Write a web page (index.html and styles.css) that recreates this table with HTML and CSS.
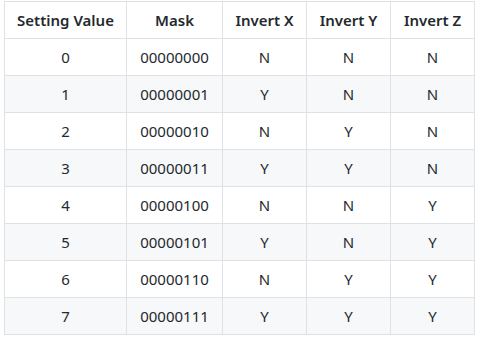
FILE: index.html
```html
<!DOCTYPE html>
<html>
<head>
<title>Invert Mask Table</title>
<link rel="stylesheet" href="styles.css">
</head>
<body>

<div class="wrap">
    <table class="maskTable">
        <thead>
            <tr>
                <th class="colValue">Setting Value</th>
                <th class="colMask">Mask</th>
                <th class="colAxis">Invert X</th>
                <th class="colAxis">Invert Y</th>
                <th class="colAxis">Invert Z</th>
            </tr>
        </thead>
        <tbody>
            <tr><td>0</td><td>00000000</td><td>N</td><td>N</td><td>N</td></tr>
            <tr><td>1</td><td>00000001</td><td>Y</td><td>N</td><td>N</td></tr>
            <tr><td>2</td><td>00000010</td><td>N</td><td>Y</td><td>N</td></tr>
            <tr><td>3</td><td>00000011</td><td>Y</td><td>Y</td><td>N</td></tr>
            <tr><td>4</td><td>00000100</td><td>N</td><td>N</td><td>Y</td></tr>
            <tr><td>5</td><td>00000101</td><td>Y</td><td>N</td><td>Y</td></tr>
            <tr><td>6</td><td>00000110</td><td>N</td><td>Y</td><td>Y</td></tr>
            <tr><td>7</td><td>00000111</td><td>Y</td><td>Y</td><td>Y</td></tr>
        </tbody>
    </table>
</div>

</body>
</html>
```

FILE: styles.css
```css
body{
    margin:0;
    background:#ffffff;
    font-family:"Noto Sans", "Open Sans", sans-serif;
    color:#24292e;
}
.wrap{
    padding:1px 0 0 4px;
}
.maskTable{
    border-collapse:collapse;
    table-layout:fixed;
    width:470px;
    font-size:15px;
}
.maskTable th,
.maskTable td{
    border:1px solid #dfe2e5;
    height:37px;
    padding:0 6px;
    text-align:center;
    box-sizing:border-box;
}
.maskTable th{
    font-weight:600;
}
.maskTable tbody tr:nth-child(even){
    background:#f6f8fa;
}
.maskTable tbody tr:nth-child(odd){
    background:#ffffff;
}
.colValue{
    width:122px;
}
.colMask{
    width:96px;
}
.colAxis{
    width:84px;
}
```
